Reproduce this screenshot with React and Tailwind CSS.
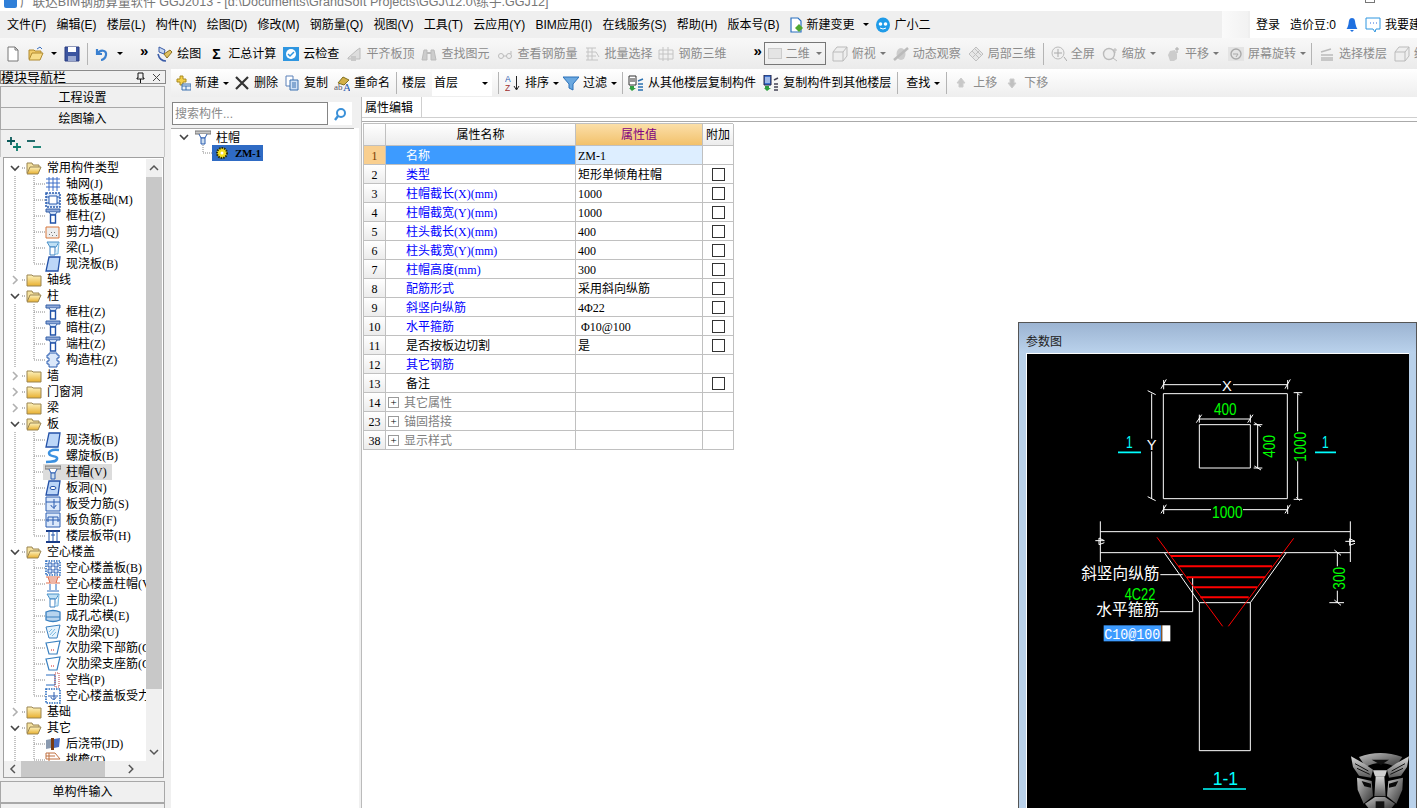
import React from 'react';

const MENU = ['文件(F)', '编辑(E)', '楼层(L)', '构件(N)', '绘图(D)', '修改(M)', '钢筋量(Q)', '视图(V)', '工具(T)', '云应用(Y)', 'BIM应用(I)', '在线服务(S)', '帮助(H)', '版本号(B)'];

const TREE = [
  { label: '常用构件类型', open: true, items: [['轴网(J)', 'grid'], ['筏板基础(M)', 'raft'], ['框柱(Z)', 'col'], ['剪力墙(Q)', 'wall'], ['梁(L)', 'beam'], ['现浇板(B)', 'slab']] },
  { label: '轴线' },
  { label: '柱', open: true, items: [['框柱(Z)', 'col'], ['暗柱(Z)', 'col'], ['端柱(Z)', 'col'], ['构造柱(Z)', 'gcol']] },
  { label: '墙' },
  { label: '门窗洞' },
  { label: '梁' },
  { label: '板', open: true, items: [['现浇板(B)', 'slab'], ['螺旋板(B)', 'spiral'], ['柱帽(V)', 'cap', true], ['板洞(N)', 'hole'], ['板受力筋(S)', 'bar'], ['板负筋(F)', 'neg'], ['楼层板带(H)', 'band']] },
  { label: '空心楼盖', open: true, items: [['空心楼盖板(B)', 'hollow'], ['空心楼盖柱帽(V)', 'hcap'], ['主肋梁(L)', 'beam'], ['成孔芯模(E)', 'core'], ['次肋梁(U)', 'rib'], ['次肋梁下部筋(G)', 'rib2'], ['次肋梁支座筋(G)', 'rib2'], ['空档(P)', 'gap'], ['空心楼盖板受力筋(S)', 'hbar']] },
  { label: '基础' },
  { label: '其它', open: true, items: [['后浇带(JD)', 'post'], ['挑檐(T)', 'eave']] },
];

const PROPS = [
  ['名称', 'ZM-1', 'sel'],
  ['类型', '矩形单倾角柱帽', 'blue', true],
  ['柱帽截长(X)(mm)', '1000', 'blue', true],
  ['柱帽截宽(Y)(mm)', '1000', 'blue', true],
  ['柱头截长(X)(mm)', '400', 'blue', true],
  ['柱头截宽(Y)(mm)', '400', 'blue', true],
  ['柱帽高度(mm)', '300', 'blue', true],
  ['配筋形式', '采用斜向纵筋', 'blue', true],
  ['斜竖向纵筋', '4Φ22', 'blue', true],
  ['水平箍筋', ' Φ10@100', 'blue', true],
  ['是否按板边切割', '是', 'black', true],
  ['其它钢筋', '', 'blue'],
  ['备注', '', 'black', true],
];

const GROUPS = [['14', '其它属性'], ['23', '锚固搭接'], ['38', '显示样式']];

const colPath = (
  <>
    <path d="M1 1h14v3H1z" fill="#8fa9d8" stroke="#3560a8" />
    <path d="M4 4l2 3h4l2-3" fill="#cfe0f7" stroke="#3560a8" />
    <path d="M5.500 7h5v8h-5z" fill="#fff" stroke="#2152a8" strokeWidth="1.4" />
  </>
);

const G = {
  col: colPath,
  grid: <path d="M1 3h14M1 7h14M1 11h14M4 1v14M8 1v14M12 1v14" stroke="#3a6cc8" fill="none" />,
  raft: <><path d="M1 1h14v14H1z" fill="#dbe8fa" stroke="#2a5cb0" strokeWidth="1.5" strokeDasharray="2 1" /><path d="M4 4h8v8H4z" fill="#fff" stroke="#2a5cb0" /><path d="M1 5h3M12 5h3M1 11h3M12 11h3" stroke="#2a5cb0" /></>,
  wall: <><path d="M1 3h13v11H1z" fill="#eee" stroke="#d8763a" /><path d="M4 10l1 1M7 12l1-1M9 8l1 1M11 11l1 1M6 8l1 1" stroke="#777" /></>,
  beam: <><path d="M2 2h12l-3 5H5z" fill="#bfe0f5" stroke="#4a90c8" /><path d="M5 7h5v8H5z" fill="#fff" stroke="#3a80c0" /><path d="M14 2l-1 12h-3" fill="#d4ecfa" stroke="#7ab8e0" /></>,
  slab: <path d="M4 1h11l-2 14H1z" fill="#bcd6f8" stroke="#2452a8" strokeWidth="1.3" />,
  spiral: <path d="M14 2C6 1 2 4 5 7c3 2 8 1 7 4s-6 3-11 3" fill="none" stroke="#3a90e0" strokeWidth="2.5" />,
  cap: <><path d="M0 2h16v3H0z" fill="#c8c8c8" stroke="#777" /><path d="M4 5l2 4h4l2-4" fill="#fff" stroke="#2a5cb0" /><path d="M6 9h4v6H6z" fill="#cde" stroke="#2a5cb0" /></>,
  hole: <><path d="M4 1h11l-2 14H1z" fill="#bcd6f8" stroke="#2452a8" strokeWidth="1.3" /><ellipse cx="8" cy="8" rx="3" ry="1.6" fill="#fff" stroke="#2452a8" /></>,
  bar: <><path d="M1 1h14v14H1z" fill="#dbe8fa" stroke="#2a5cb0" /><path d="M1 6h14M9 3v10M6 9c0 3 5 3 5 0" fill="none" stroke="#2a5cb0" /></>,
  neg: <><path d="M1 1h14v14H1z" fill="#dbe8fa" stroke="#2a5cb0" /><path d="M3 5h10v5M3 5v5M1 8h14M8 5v8" fill="none" stroke="#2a5cb0" /></>,
  band: <><path d="M1 3h14M1 14h14" stroke="#1a3c88" strokeWidth="2" /><path d="M4 3v10M12 3v10M8 3v10M6 7h4" stroke="#2a5cb0" /></>,
  hollow: <><path d="M1 1h14v14H1z" fill="#fff" stroke="#2a6cc0" strokeWidth="1.6" strokeDasharray="1.5 1" /><path d="M3 3h4v4H3zM9 3h4v4H9zM3 9h4v4H3zM9 9h4v4H9z" fill="#cfe2fa" stroke="#2a5cb0" /></>,
  hcap: <><path d="M1 1h14M1 7h14" stroke="#e07050" strokeWidth="1.2" /><path d="M3 1l2 6M13 1l-2 6M4 3h8M4 5h8" stroke="#e07050" /><path d="M5 8v6M11 8v6M2 15h12" stroke="#2a6cc0" /></>,
  core: <><path d="M1 4q7-3 14 0v8q-7 3-14 0z" fill="#b8d4ee" stroke="#3a80c0" strokeWidth="1.3" /><path d="M1 9h14" stroke="#3a80c0" /></>,
  rib: <><path d="M1 3l14-2-3 13H4z" fill="#e6f3fc" stroke="#3a80c0" /><path d="M5 11l5-6M7 12l4-4M4 8l3-3" stroke="#7ab8e0" /></>,
  rib2: <><path d="M1 3l14-2-3 13H4z" fill="#fff" stroke="#3a80c0" strokeWidth="1.2" /><path d="M6 10h1M8 10h1" stroke="#d02020" /></>,
  gap: <><path d="M1 3h9v10H1" fill="none" stroke="#2a6cc0" /><path d="M10 1h4v14h-4z" fill="none" stroke="#c04040" strokeDasharray="1 1" /></>,
  hbar: <><path d="M1 1h14v14H1z" fill="#fff" stroke="#2a6cc0" strokeWidth="1.6" strokeDasharray="1.5 1" /><path d="M3 8h10M9 4v8M6 9c0 3 5 3 5 0" fill="none" stroke="#2a5cb0" /></>,
  gcol: <><path d="M4 1h8v2h2v3h-2v3h2v3h-2v3H4v-3H2V9h2V6H2V3h2z" fill="#dbe8fa" stroke="#2a5cb0" /></>,
  post: <><path d="M1 4l5-1v9l-5 1z" fill="#8a9ab0" /><path d="M6 2h3v12H6z" fill="#7a3a10" /><path d="M9 3l6-1-1 9-5 1z" fill="#4a6cc0" /></>,
  eave: <><path d="M1 1h9l5 6H1z" fill="#fff" stroke="#c07040" /><path d="M1 4h9M4 1v14M1 10h6v5H1z" fill="none" stroke="#c07040" /></>,
  // toolbar
  file: <path d="M3 1h7l3 3v11H3zM10 1v3h3" fill="#fff" stroke="#777" />,
  open: <><path d="M1 13V4h5l1 1h6v2" fill="#f3cc6a" stroke="#b08a30" /><path d="M1 14l3-7h11l-3 7z" fill="#f8dd8a" stroke="#b08a30" /><path d="M9 3l3-2 2 2" fill="none" stroke="#3a70c0" /></>,
  save: <><path d="M1 1h14v14H1z" fill="#3c55a0" stroke="#2a3c80" /><path d="M4 1h8v5H4z" fill="#fff" /><path d="M4 10h8v5H4z" fill="#9aa8d0" /></>,
  undo: <path d="M3 3v5h5M3.500 8C6 3 13 4 12 9c-.5 3-3 5-5 5" fill="none" stroke="#3a80d0" strokeWidth="2.2" />,
  draw: <><path d="M2 1l6 3-1 4-5-2z" fill="#c8d8f0" stroke="#3a5ca8" /><path d="M7 8l6-4 2 2-5 6z" fill="#e0c060" stroke="#8a7020" /><path d="M1 8c1 4 4 7 8 7" fill="none" stroke="#3a5ca8" strokeWidth="1.6" /></>,
  cloud: <><path d="M0 1h16v14H0z" fill="#2f96e0" /><circle cx="8" cy="8" r="5" fill="#fff" /><path d="M5 8l2 2 4-4" stroke="#2f96e0" fill="none" strokeWidth="1.5" /></>,
  align: <><path d="M2 12l9-8 3-2v11H2z" fill="#ddd" stroke="#bbb" /><path d="M5 10h5v5H5z" fill="#c8c8c8" /></>,
  binoc: <><path d="M3 4h3v10H1zM10 4h3l2 10h-5z" fill="#ccc" stroke="#bbb" /><path d="M6 7h4" stroke="#bbb" strokeWidth="2" /></>,
  glasses: <><circle cx="4" cy="10" r="2.5" fill="none" stroke="#bbb" /><circle cx="12" cy="10" r="2.5" fill="none" stroke="#bbb" /><path d="M6.500 10h3M14 8V5" stroke="#bbb" /></>,
  batch: <path d="M2 2h10M2 6h10M2 10h10M2 14h12M4 2v12M8 2v12M12 6l3 5" stroke="#c4c4c4" fill="none" />,
  rebar3: <path d="M1 4h14v9H1zM1 8h14M5 1v14M10 1v14" stroke="#c4c4c4" fill="none" />,
  box: <><path d="M1 6l4-5h10v9l-4 5H1z" fill="#eee" stroke="#bbb" /><path d="M1 6h10v9M11 6l4-5" fill="none" stroke="#bbb" /></>,
  orbit: <><ellipse cx="8" cy="8" rx="4.500" ry="6" fill="#ccc" /><path d="M1 14L15 2" stroke="#bbb" strokeWidth="2.5" /></>,
  local3: <path d="M1 8l7-7 7 7-7 7z M4 5l7 7M7 3l7 7M5 11l7-7" fill="#e6e6e6" stroke="#c0c0c0" />,
  full: <><circle cx="7" cy="7" r="6" fill="#f0f0f0" stroke="#bbb" /><path d="M7 3v8M3 7h8M13 11l3 4" stroke="#aaa" /></>,
  zoom: <><circle cx="7" cy="8" r="5.500" fill="#eee" stroke="#bbb" strokeWidth="1.4" /><path d="M11 12l4 3M13 2v5M11 4h4" stroke="#bbb" /></>,
  pan: <><path d="M3 9l2-4 5-1 2 4v5l-3 2H5z" fill="#ccc" /><path d="M12 1v6M10 3h4" stroke="#aaa" /></>,
  rotate: <><path d="M0 1h16v14H0z" fill="#e4e4e4" /><circle cx="8" cy="8" r="5" fill="none" stroke="#aaa" strokeWidth="1.4" /><path d="M5 8h5l-2 3" stroke="#aaa" fill="none" /></>,
  floor: <path d="M2 6l10-3M2 9h12M2 12h12M2 14h12" stroke="#bbb" strokeWidth="1.4" fill="none" />,
  newItem: <><path d="M5 1h3v3h3v3H8v3H5V7H2V4h3z" fill="#f5d04a" stroke="#a88a20" /><path d="M7 9h9v6H7z" fill="#e8f0fa" stroke="#3a70b0" /><path d="M7 11h9M11 11v4" stroke="#3a70b0" /></>,
  del: <path d="M2 2l12 12M14 2L2 14" stroke="#333" strokeWidth="2.2" />,
  copy: <><path d="M2 1h7v10H2z" fill="#fff" stroke="#5a80b8" /><path d="M6 5h8v10H6z" fill="#cfe0f5" stroke="#3a70b0" /><path d="M8 8h4M8 10h4M8 12h4" stroke="#3a70b0" /></>,
  rename: <><path d="M4 8l5-6 6 3-5 5z" fill="#d4b048" stroke="#807020" /><text x="0" y="15" fontSize="9" fill="#556" fontFamily="Liberation Serif">ab</text><text x="9" y="16" fontSize="11" fill="#2a5cb0" fontFamily="Liberation Serif">A</text></>,
  sort: <><text x="0" y="7" fontSize="8.500" fill="#2a5cb0" fontFamily="Liberation Sans">A</text><text x="0" y="15.500" fontSize="8.500" fill="#a03030" fontFamily="Liberation Sans">Z</text><path d="M11.500 1v13M9 11l2.500 4 2.500-4" stroke="#222" fill="none" /></>,
  funnel: <path d="M0 2h16l-6 7v6l-4-2V9z" fill="#6aa8e0" stroke="#2a70b8" />,
  fromFloor: <><path d="M1 1h7v9H1z" fill="#fff" stroke="#333" /><path d="M2 4h5M2 6h5" stroke="#333" /><path d="M2 11h4v2h2l-4 3-3-3h1z" fill="#30a040" /><path d="M10 6l5-2M10 9h5M10 12h5M10 15h5" stroke="#2a70b0" strokeWidth="1.4" /></>,
  toFloor: <><path d="M1 0h7v10H1z" fill="#3a70d0" stroke="#224" /><path d="M2 3h5M2 5h5M2 7h5" stroke="#fff" /><path d="M2 11h4v2h2l-4 3-3-3h1z" fill="#30a040" /><path d="M11 5l4-2M11 9h4M11 12h4M11 15h4" stroke="#445" strokeWidth="1.4" /></>,
  up: <path d="M8 3l4 5h-2v4H6V8H4z" fill="#c8c8c8" stroke="#ccc" />,
  down: <path d="M8 13l4-5h-2V4H6v4H4z" fill="#c0c0c0" stroke="#ccc" />,
  change: <><path d="M2 1h7l3 3v11H2z" fill="#fff" stroke="#2a70c0" strokeWidth="1.2" /><path d="M10 7l4 4-4 4-4-4z" fill="#50a830" /></>,
  bot: <><ellipse cx="8" cy="8" rx="7" ry="7.500" fill="#1f9be8" /><circle cx="5.500" cy="7" r="1.8" fill="#fff" /><circle cx="10.500" cy="7" r="1.8" fill="#fff" /><path d="M5 11q3 2 6 0" stroke="#fff" fill="none" /></>,
  bell: <><path d="M8 1c3 0 3 3 3.500 6s2 5 2 5h-11s1.500-2 2-5S5 1 8 1z" fill="#1f70e0" /><path d="M6 13h4l-2 2z" fill="#1f70e0" /></>,
  msg: <><path d="M1 1h14v11h-4l-1 3-2-3H1z" fill="#fff" stroke="#2f96e0" /><path d="M5 6h1M8 6h1M11 6h1" stroke="#2f6ce0" /></>,
  search: <><circle cx="9" cy="7" r="4" fill="#fff" stroke="#3a90d8" strokeWidth="2" /><path d="M6 10l-3 4" stroke="#3a90d8" strokeWidth="2.4" /></>,
  addAll: <><path d="M1 5h8M5 1v8" stroke="#0a5a5a" strokeWidth="1.8" /><path d="M7 11h8M11 7v8" stroke="#0a7a6a" strokeWidth="1.8" /></>,
  delAll: <><path d="M1 5h8" stroke="#0a5a5a" strokeWidth="1.8" /><path d="M7 11h8" stroke="#0a7a6a" strokeWidth="1.8" /></>,
  gear: <><circle cx="8" cy="8" r="5" fill="#f5e020" stroke="#303000" strokeDasharray="1.500 1" strokeWidth="2" /><circle cx="8" cy="8" r="1.500" fill="#fff" /></>,
};

const Ico = ({ n }) => (
  <svg width="16" height="16" viewBox="0 0 16 16" className="shrink-0">{G[n]}</svg>
);

const Caret = ({ off }) => (
  <span className={off ? 'block h-0 w-0 shrink-0 border-x-[3px] border-t-[3px] border-x-transparent border-t-[#777]' : 'block h-0 w-0 shrink-0 border-x-[3px] border-t-[3px] border-x-transparent border-t-black'} />
);

const Sep = ({ cls = '' }) => <span className={`h-[22px] w-px shrink-0 bg-[#b4b4b4] ${cls}`} />;

const Tool = ({ icon, label, off, dd, cls = '' }) => (
  <div className={`flex shrink-0 items-center ${cls}`}>
    <Ico n={icon} />
    {label && <span className={off ? 'ml-1 text-[#8c8c8c]' : 'ml-1 text-black'}>{label}</span>}
    {dd && <span className="ml-[4px] flex"><Caret off={off} /></span>}
  </div>
);

const Chevrons = () => <span className="block shrink-0 text-[15px] leading-none font-bold tracking-[-1px] text-black">»</span>;

// connector column of a tree row: chevron, dotted guides
const Lead = ({ kind, open, last, branch }) => (
  <svg width="41" height="16" viewBox="0 0 41 16" className="shrink-0">
    {kind === 'group' ? (
      <>
        {open
          ? <path d="M7 6l4 4 4-4" fill="none" stroke="#444" strokeWidth="1.6" />
          : <path d="M9 4l4 4-4 4" fill="none" stroke="#b0b0b0" strokeWidth="1.6" />}
        <path d="M18 8h3" stroke="#777" strokeDasharray="1 1" />
      </>
    ) : (
      <>
        {branch && <path d="M11 0v16" stroke="#888" strokeDasharray="1 1" />}
        <path d={last ? 'M30 0v8h11' : 'M30 0v16M30 8h11'} stroke="#888" strokeDasharray="1 1" fill="none" />
      </>
    )}
  </svg>
);

const Folder = ({ open }) => (
  <svg width="16" height="14" viewBox="0 0 16 14" className="shrink-0">
    <defs>
      <linearGradient id="fold" x1="0" y1="0" x2="0" y2="1">
        <stop offset="0" stopColor="#fdf3c0" />
        <stop offset="1" stopColor="#e8b030" />
      </linearGradient>
    </defs>
    {open ? (
      <>
        <path d="M1 12V2h5l1 2h6v3" fill="#f5e2a0" stroke="#9a8450" />
        <path d="M1 13l3-7h11l-3 7z" fill="url(#fold)" stroke="#9a8450" />
      </>
    ) : (
      <path d="M1 13V2h5l1 1h8v10z" fill="url(#fold)" stroke="#9a8450" />
    )}
  </svg>
);

const NavTree = () => (
  <div className="w-[142px] overflow-hidden pt-[1px] font-['Liberation_Serif','Noto_Sans_CJK_SC',serif]">
    {TREE.map((g) => (
      <div key={g.label}>
        <div className="flex h-4 items-center">
          <Lead kind="group" open={g.open} />
          <span className="-ml-[19px]"><Folder open={g.open} /></span>
          <span className="ml-[5px]">{g.label}</span>
        </div>
        {g.open && g.items.map(([label, icon, sel], i) => (
          <div key={label + i} className="flex h-4 items-center">
            <Lead kind="child" branch last={i === g.items.length - 1} />
            <div className={sel ? '-ml-[2px] flex h-4 w-[69px] shrink-0 items-center bg-[#dcdcdc] pl-[2px]' : 'flex h-4 items-center'}>
              <Ico n={icon} />
              <span className="ml-[5px]">{label}</span>
            </div>
          </div>
        ))}
      </div>
    ))}
  </div>
);

const NavPanel = () => (
  <div className="flex w-[168px] shrink-0 flex-col bg-[#f0f0f0]">
    <div className="mt-px flex h-[14px] w-[166px] items-center justify-between border border-[#8a8a8a] bg-[#f0f0f0] pr-1 text-[13px] leading-none">
      <span>模块导航栏</span>
      <span className="flex items-center gap-[7px]">
        <svg width="9" height="11" viewBox="0 0 9 11"><path d="M2 1h5v5h1v1H1V6h1zM4.500 7v4" fill="none" stroke="#111" /></svg>
        <svg width="9" height="9" viewBox="0 0 9 9"><path d="M1 1l7 7M8 1L1 8" stroke="#444" /></svg>
      </span>
    </div>
    <div className="mt-[2px] flex h-[22px] w-[165px] items-center justify-center border border-[#a8a8a8] bg-[#f0f0f0] pt-px">工程设置</div>
    <div className="flex h-[22px] w-[165px] items-center justify-center border border-[#a8a8a8] border-t-0 bg-[#f0f0f0] pt-px">绘图输入</div>
    <div className="flex h-[27px] w-[165px] items-center gap-1 border-x border-[#c8c8c8] pl-[5px]">
      <Ico n="addAll" /><Ico n="delAll" />
    </div>
    <div className="ml-[3px] flex h-[621px] w-[161px] flex-col border border-[#a0a0a0] bg-white">
      <div className="flex min-h-0 flex-1 pt-px">
        <NavTree />
        <div className="flex w-[16px] shrink-0 flex-col bg-[#f0f0f0]">
          <div className="flex h-[18px] items-center justify-center">
            <svg width="10" height="8" viewBox="0 0 10 8"><path d="M1 6l4-4 4 4" fill="none" stroke="#555" strokeWidth="1.5" /></svg>
          </div>
          <div className="h-[512px] bg-[#c8c8c8]" />
          <div className="mt-auto flex h-[18px] items-center justify-center">
            <svg width="10" height="8" viewBox="0 0 10 8"><path d="M1 2l4 4 4-4" fill="none" stroke="#555" strokeWidth="1.5" /></svg>
          </div>
        </div>
      </div>
      <div className="flex h-[16px] shrink-0 items-center bg-[#f0f0f0]">
        <svg width="17" height="10" viewBox="0 0 17 10"><path d="M11 1L7 5l4 4" fill="none" stroke="#555" strokeWidth="1.5" /></svg>
        <div className="h-[16px] w-[85px] bg-[#c8c8c8]" />
        <svg width="42" height="10" viewBox="0 0 42 10" className="ml-auto mr-[16px]"><path d="M24 1l4 4-4 4" fill="none" stroke="#555" strokeWidth="1.5" /></svg>
      </div>
    </div>
    <div className="mt-[3px] flex h-[22px] w-[165px] items-center justify-center border border-[#a8a8a8] bg-[#f0f0f0]">单构件输入</div>
    <div className="h-[5px] w-[165px] border-x border-t border-[#a8a8a8]" />
  </div>
);

const ListPanel = () => (
  <div className="flex w-[188px] shrink-0 flex-col bg-white">
    <div className="flex h-[31px] shrink-0 items-start bg-[#f0f0f0] pt-[5px] pl-[1px]">
      <div className="flex h-[23px] w-[156px] items-center border border-[#858585] bg-white pl-[2px] text-[#8a8a8a]">搜索构件...</div>
      <div className="flex h-[23px] w-[24px] items-center justify-center bg-white"><Ico n="search" /></div>
    </div>
    <div className="h-px w-[183px] bg-[#a8a8a8]" />
    <div className="pl-[8px] font-['Liberation_Serif','Noto_Sans_CJK_SC',serif]">
      <div className="flex h-4 items-center">
        <svg width="16" height="16" viewBox="0 0 16 16" className="shrink-0"><path d="M1 6l4 4 4-4" fill="none" stroke="#444" strokeWidth="1.6" /></svg>
        <Ico n="cap" />
        <span className="ml-[5px] pt-[2px]">柱帽</span>
      </div>
      <div className="flex h-4 items-center">
        <svg width="33" height="16" viewBox="0 0 33 16" className="shrink-0"><path d="M24 0v8h9" fill="none" stroke="#888" strokeDasharray="1 1" /></svg>
        <div className="flex h-4 w-[51px] items-center bg-[#2f6bc4] pl-1">
          <svg width="12" height="12" viewBox="2 2 12 12" className="shrink-0">{G.gear}</svg>
          <span className="ml-[7px] text-[11px] font-bold tracking-[-0.3px] text-black">ZM-1</span>
        </div>
      </div>
    </div>
  </div>
);

const cell = 'flex h-[19px] items-center border-r border-b border-[#c0c0c0] pt-px';

const PropRow = ({ idx, name, value, kind, check }) => {
  const sel = kind === 'sel';
  return (
    <>
      <div className={`${cell} justify-center ${sel ? 'bg-[#f9cf8f] text-[#7a3b00]' : 'bg-gradient-to-b from-white to-[#ececec]'}`}>{idx}</div>
      <div className={`${cell} pl-[20px] ${sel ? 'bg-[#3d9bff] text-white' : kind === 'blue' ? 'text-[#0000ff]' : 'text-black'}`}>{name}</div>
      <div className={`${cell} whitespace-pre pl-[2px] ${sel ? 'bg-[#ddeeff]' : ''}`}>{value}</div>
      <div className={`${cell} justify-center`}>
        {check && <span className="h-[13px] w-[13px] border border-[#333] bg-white" />}
      </div>
    </>
  );
};

const PropTable = () => (
  <div className="ml-px mt-[1px] grid w-[370px] grid-cols-[22px_190px_127px_31px] border-t border-l border-[#c0c0c0] font-['Liberation_Serif','Noto_Sans_CJK_SC',serif]">
    <div className="flex h-[22px] items-center border-r border-b border-[#c0c0c0] bg-gradient-to-b from-white to-[#ececec]" />
    <div className="flex h-[22px] items-center justify-center border-r border-b border-[#c0c0c0] bg-gradient-to-b from-white to-[#ececec]">属性名称</div>
    <div className="flex h-[22px] items-center justify-center border-r border-b border-[#c0c0c0] bg-gradient-to-b from-[#fbdfa8] to-[#f2c16a] text-[#800080]">属性值</div>
    <div className="flex h-[22px] items-center justify-center border-r border-b border-[#c0c0c0] bg-gradient-to-b from-white to-[#ececec]">附加</div>
    {PROPS.map((p, i) => (
      <PropRow key={p[0]} idx={i + 1} name={p[0]} value={p[1]} kind={p[2]} check={p[3]} />
    ))}
    {GROUPS.map(([idx, name]) => (
      <React.Fragment key={idx}>
        <div className={`${cell} justify-center bg-gradient-to-b from-white to-[#ececec]`}>{idx}</div>
        <div className={`${cell} pl-[2px] text-[#808080]`}>
          <span className="flex h-[11px] w-[11px] items-center justify-center border border-[#9a9a9a] text-[11px] leading-none text-black">+</span>
          <span className="ml-[5px]">{name}</span>
        </div>
        <div className={cell} />
        <div className={cell} />
      </React.Fragment>
    ))}
  </div>
);

const Logo = () => (
  <g transform="translate(984 1275)">
    <defs>
      <linearGradient id="tf" x1="0" y1="0" x2="1" y2="1">
        <stop offset="0" stopColor="#c4c4c4" />
        <stop offset="0.5" stopColor="#7a7a7a" />
        <stop offset="1" stopColor="#333" />
      </linearGradient>
      <linearGradient id="tf2" x1="0" y1="0" x2="0" y2="1">
        <stop offset="0" stopColor="#d8d8d8" />
        <stop offset="1" stopColor="#5a5a5a" />
      </linearGradient>
    </defs>
    <path d="M42 32Q105 8 172 32L150 62Q105 38 62 62Z" fill="url(#tf)" />
    <path d="M80 40H132L108 56Z" fill="#111" />
    <path d="M18 30L58 52 84 70 78 94 42 88 24 62Z" fill="url(#tf2)" />
    <path d="M192 30L152 52 126 70 132 94 168 88 186 62Z" fill="url(#tf2)" />
    <path d="M30 52L70 74M36 66L74 84M180 52L140 74M174 66L136 84" stroke="#111" strokeWidth="3" />
    <path d="M84 72H126L120 90H90Z" fill="#d0d0d0" />
    <path d="M92 90H118L122 150H88Z" fill="url(#tf2)" />
    <path d="M36 94L80 104 84 150 56 172 38 130Z" fill="url(#tf)" />
    <path d="M174 94L130 104 126 150 154 172 172 130Z" fill="url(#tf)" />
    <path d="M50 104L78 112 78 124 58 120ZM160 104L132 112 132 124 152 120Z" fill="#0a0a0a" />
    <path d="M60 172L90 152H120L150 172 136 190H74Z" fill="url(#tf)" />
    <path d="M92 165H118V190H92Z" fill="#141414" />
  </g>
);

const CadText = ({ children, x, y, size = 50, fill = '#00ff00', rotate, mono, len }) => (
  <text
    x={x}
    y={y}
    fontSize={size}
    fill={fill}
    textAnchor="middle"
    textLength={len}
    lengthAdjust={len ? 'spacingAndGlyphs' : undefined}
    fontFamily={mono ? 'Liberation Mono, monospace' : 'Liberation Sans, Noto Sans CJK SC, sans-serif'}
    transform={rotate ? `rotate(-90 ${x} ${y})` : undefined}
  >
    {children}
  </text>
);

const WHITE = 'M439 217H811V532H439Z M547 310H700V440H547Z '
  + 'M440 190H612M648 190H812M432 202L448 174M804 202L820 174M440 176V204M812 176V204 '
  + 'M404 217V352M404 390V532M392 208L416 220M392 526L416 538 '
  + 'M842 217V330M842 420V532M830 214L856 214M830 534L856 534M838 212L848 222M838 528L848 538 '
  + 'M440 565H582M678 565H812M432 576L448 550M804 576L820 550M440 552V578M812 552V578 '
  + 'M547 293H700M538 304L554 280M692 304L708 280M547 280V304M700 280V304 '
  + 'M722 310V440M710 310H736M710 440H736M712 304L732 316M712 434L732 446 '
  + 'M250 631H1000M250 694H1000M250 600V722M1000 600V722 '
  + 'M235 658H262L246 650V670L262 664M985 660H1014L998 652V672L1014 666 '
  + 'M442 694L547 844M808 694L700 844M547 844H700M547 844V1288H700V844 '
  + 'M430 760H497M428 871H527V768 '
  + 'M961 694V735M961 808V844M937 844H981M952 686L972 702M952 836L972 852';

const RED = 'M462 704H790M485 735H765M510 768H745M530 798H720M550 828H695';

const ParamWindow = () => (
  <div className="absolute left-[1018px] top-[322px] flex h-[486px] w-[399px] flex-col border-t border-l border-r border-[#555] bg-[#b9d1ea]">
    <div className="flex h-[30px] shrink-0 items-center bg-gradient-to-b from-[#9cb4d2] to-[#bad2ec] pl-[7px] pt-[8px] text-[#222]">参数图</div>
    <div className="ml-[7px] mr-[7px] min-h-0 flex-1 border-l border-t border-white bg-black">
      <svg width="382" height="454" viewBox="30 98 1146 1362" className="block">
        <path d={WHITE} fill="none" stroke="#fff" strokeWidth="3" />
        <path d="M420 648L617 915M830 651L634 915" fill="none" stroke="#ff0000" strokeWidth="3" />
        <path d={RED} fill="none" stroke="#ff0000" strokeWidth="6" />
        <path d="M303 393H372M894 393H957M558 1403H687" fill="none" stroke="#00ffff" strokeWidth="5" />
        <CadText x={630} y={209} size={44} fill="#fff">X</CadText>
        <CadText x={404} y={386} size={44} fill="#fff">Y</CadText>
        <CadText x={625} y={280} len={68}>400</CadText>
        <CadText x={775} y={375} rotate len={68}>400</CadText>
        <CadText x={866} y={376} rotate len={90}>1000</CadText>
        <CadText x={631} y={590} len={92}>1000</CadText>
        <CadText x={983} y={771} rotate len={68}>300</CadText>
        <CadText x={337} y={379} fill="#00ffff" len={20}>1</CadText>
        <CadText x={925} y={379} fill="#00ffff" len={20}>1</CadText>
        <CadText x={625} y={1390} size={54} fill="#00ffff" len={76}>1-1</CadText>
        <CadText x={310} y={772} size={47} fill="#fff">斜竖向纵筋</CadText>
        <CadText x={332} y={882} size={47} fill="#fff">水平箍筋</CadText>
        <CadText x={369} y={836} len={92}>4C22</CadText>
        <rect x="260" y="912" width="173" height="48" fill="#3d9bff" />
        <rect x="433" y="912" width="3" height="48" fill="#c86a10" />
        <rect x="436" y="912" width="24" height="48" fill="#fff" />
        <CadText x={346} y={953} size={46} fill="#fff" mono len={168}>C10@100</CadText>
        <Logo />
      </svg>
    </div>
  </div>
);

export default function App() {
  return (
    <div className="relative flex h-[808px] w-[1417px] flex-col overflow-hidden whitespace-nowrap bg-white font-['Liberation_Sans','Noto_Sans_CJK_SC',sans-serif] text-[12px] leading-none text-black">
      {/* title bar, cut off at the top of the screen */}
      <div className="relative h-[11px] shrink-0 overflow-hidden bg-white">
        <div className="absolute left-[4px] top-[-5px] h-[13px] w-[13px] rounded-[2px] bg-[#2f7fd8]" />
        <div className="absolute left-[20px] top-[-7px] text-[12.6px] leading-[18px] text-[#777]">广联达BIM钢筋算量软件 GGJ2013 - [d:\Documents\GrandSoft Projects\GGJ\12.0\练手.GGJ12]</div>
        <div className="absolute left-[1365px] top-[-6px] h-[9px] w-[10px] border border-[#777]" />
      </div>

      {/* menu */}
      <div className="flex h-[27px] shrink-0 items-center bg-[#efefef]">
        <div className="flex items-center gap-[10.25px] pl-[7px]">
          {MENU.map((m) => <span key={m}>{m}</span>)}
        </div>
        <div className="ml-[9px] flex items-center">
          <Ico n="change" />
          <span className="ml-[2px]">新建变更</span>
          <span className="ml-[8px] flex"><Caret /></span>
          <span className="ml-[6px] flex"><Ico n="bot" /></span>
          <span className="ml-1">广小二</span>
        </div>
        <div className="ml-auto flex h-full items-stretch">
          <div className="w-[26px] bg-gradient-to-r from-[#fafafa] to-[#f2f2f2]" />
          <div className="ml-[2px] flex w-[167px] shrink-0 items-center overflow-hidden bg-white pl-[6px]">
            <span className="shrink-0">登录</span>
            <span className="ml-[10px] shrink-0">造价豆:0</span>
            <span className="ml-[8px] flex shrink-0"><Ico n="bell" /></span>
            <span className="ml-[5px] flex shrink-0"><Ico n="msg" /></span>
            <span className="ml-[4px] shrink-0">我要建议</span>
          </div>
        </div>
      </div>

      {/* main toolbar */}
      <div className="flex h-[31px] shrink-0 items-center gap-[7px] overflow-hidden bg-gradient-to-b from-[#f8f8f8] to-[#ebebeb] pl-[5px]">
        <Tool icon="file" />
        <Tool icon="open" />
        <Caret />
        <Tool icon="save" />
        <Sep />
        <Tool icon="undo" cls="-ml-px" />
        <Caret />
        <span className="mb-[6px] ml-[10px]"><Chevrons /></span>
        <Tool icon="draw" label="绘图" cls="ml-[3px]" />
        <div className="flex w-[68px] shrink-0 items-center"><span className="ml-[4px] w-[16px] text-[14px] font-bold">Σ</span><span>汇总计算</span></div>
        <Tool icon="cloud" label="云检查" />
        <Tool icon="align" label="平齐板顶" off />
        <Tool icon="binoc" label="查找图元" off />
        <Tool icon="glasses" label="查看钢筋量" off cls="ml-px" />
        <Tool icon="batch" label="批量选择" off />
        <Tool icon="rebar3" label="钢筋三维" off cls="-ml-px" />
        <span className="mb-[6px] ml-[20px]"><Chevrons /></span>
        <div className="-ml-[4px] flex h-[23px] w-[62px] shrink-0 items-center border border-[#777] pl-[3px] text-[#8c8c8c]">
          <span className="h-[11px] w-[14px] border border-[#ccc] bg-[#e4e4e4]" />
          <span className="ml-1">二维</span>
          <span className="ml-[6px] flex"><Caret off /></span>
        </div>
        <Tool icon="box" label="俯视" off dd cls="-ml-px" />
        <Tool icon="orbit" label="动态观察" off />
        <Tool icon="local3" label="局部三维" off />
        <Sep />
        <Tool icon="full" label="全屏" off />
        <Tool icon="zoom" label="缩放" off dd />
        <Tool icon="pan" label="平移" off dd cls="ml-[2px]" />
        <Tool icon="rotate" label="屏幕旋转" off dd cls="ml-[2px]" />
        <Sep cls="-ml-[2px]" />
        <Tool icon="floor" label="选择楼层" off />
        <Tool icon="box" label="绘图" off />
      </div>

      <div className="flex min-h-0 flex-1">
        <NavPanel />
        <div className="flex min-w-0 flex-1 flex-col bg-[#f0f0f0] pl-[3px]">
          {/* component toolbar */}
          <div className="flex h-[28px] shrink-0 items-center gap-[6px] bg-gradient-to-b from-white to-[#eeeeee] pl-[4px]">
            <Tool icon="newItem" label="新建" dd />
            <Tool icon="del" label="删除" cls="-ml-px" />
            <Tool icon="copy" label="复制" />
            <Tool icon="rename" label="重命名" />
            <Sep />
            <span className="-ml-[1px]">楼层</span>
            <div className="flex h-[26px] w-[60px] items-center justify-between bg-white pl-[2px] pr-[4px]">
              <span>首层</span>
              <Caret />
            </div>
            <Sep />
            <Tool icon="sort" label="排序" dd />
            <Tool icon="funnel" label="过滤" dd cls="-ml-[2px]" />
            <Sep cls="-ml-[1px]" />
            <Tool icon="fromFloor" label="从其他楼层复制构件" cls="-ml-px" />
            <Tool icon="toFloor" label="复制构件到其他楼层" cls="ml-px" />
            <Sep />
            <span className="ml-[2px] flex items-center gap-1"><span>查找</span><Caret /></span>
            <Sep />
            <Tool icon="up" label="上移" off />
            <Tool icon="down" label="下移" off cls="ml-px" />
          </div>
          <div className="flex min-h-0 flex-1">
            <ListPanel />
            <div className="ml-[2px] min-w-0 flex-1 border-l border-[#bbb] bg-white">
              <div className="flex h-[21px] items-end border-b border-[#cfcfcf]">
                <div className="flex h-[20px] w-[60px] items-center border-r border-[#cfcfcf] bg-white pl-[3px] pt-px">属性编辑</div>
              </div>
              <div className="mt-[3px] h-px bg-[#aaa]" />
              <PropTable />
            </div>
          </div>
        </div>
      </div>

      <ParamWindow />
    </div>
  );
}
